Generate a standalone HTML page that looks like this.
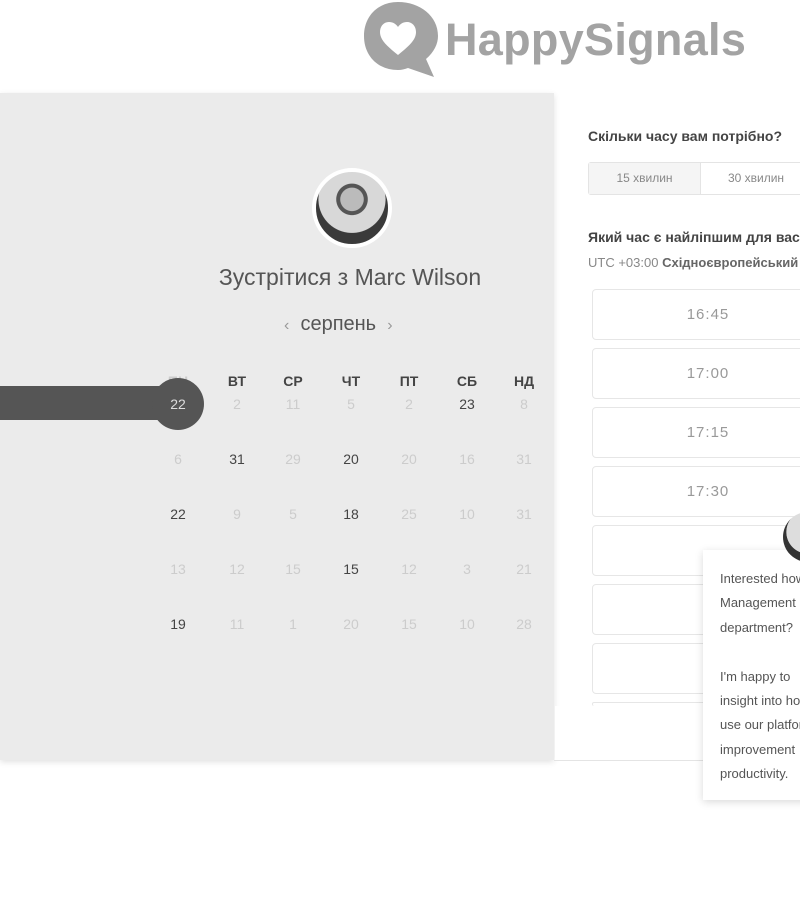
<!DOCTYPE html>
<html><head><meta charset="utf-8"><style>
body{margin:0;width:800px;height:900px;background:#fff;position:relative;overflow:hidden;font-family:"Liberation Sans",sans-serif;color:#555}
.a{position:absolute}
.left{left:0;top:93px;width:554px;height:667px;background:#ebebeb;box-shadow:0 2px 6px rgba(0,0,0,.12)}
.line{left:554px;top:760px;width:246px;height:1px;background:#e4e4e4}
.c{position:absolute;width:50px;margin-left:-25px;text-align:center;font-size:14px}
.h{font-weight:bold;color:#444;font-size:14px}
.g{color:#ccc}.d{color:#444}.w{color:#ddd}
.slot{left:592px;width:230px;height:49px;border:1px solid #e6e6e6;border-radius:4px;background:#fff;text-align:center;line-height:49px;font-size:15px;color:#999;letter-spacing:1px}
.pop{left:703px;top:550px;width:120px;height:250px;background:#fff;box-shadow:0 2px 8px rgba(0,0,0,.15);font-size:13px;color:#555;line-height:24.4px}
</style></head><body>
<svg class="a" style="left:362px;top:0" width="76" height="78" viewBox="0 0 76 78">
<path d="M36 2C16 2 2 16 2 36s14 34 34 34c4 0 7 -1 10 -2l26 9 -8 -18c8 -7 12 -15 12 -23C76 16 58 2 36 2z" fill="#a3a3a3"/>
<path d="M36 55C25 46 18 40 18 32c0-6 4-10 9-10 4 0 7 2 9 5 2-3 5-5 9-5 5 0 9 4 9 10 0 8-7 14-18 23z" fill="#fff"/>
</svg>
<div class="a" style="left:445px;top:14px;font-size:45px;font-weight:bold;color:#a3a3a3;letter-spacing:0.3px">HappySignals</div>
<div class="a left"></div>
<div class="a line"></div>
<div class="a" style="left:312px;top:168px;width:72px;height:72px;border-radius:50%;border:4px solid #fff;background:radial-gradient(circle at 50% 38%,#bbb 0 20%,#555 21% 27%,#d8d8d8 28% 58%,#3a3a3a 59%);"></div>
<div class="a" style="left:0;width:700px;top:264px;text-align:center;font-size:23px;color:#555">Зустрітися з Marc Wilson</div>
<div class="a" style="left:284px;top:313px;font-size:20px;color:#555"><span style="color:#999;font-size:16px">‹</span>&nbsp;&nbsp;серпень&nbsp;&nbsp;<span style="color:#999;font-size:16px">›</span></div>
<div class="a c h" style="left:178px;top:373px;color:#ccc">ПН</div>
<div class="a" style="left:0;top:386px;width:180px;height:34px;background:#555"></div>
<div class="a" style="left:152px;top:378px;width:52px;height:52px;border-radius:50%;background:#555"></div>
<div id="cal"></div>
<script>
var xs=[178,237,293,351,409,467,524],hd=["ПН","ВТ","СР","ЧТ","ПТ","СБ","НД"],
rows=[[22,2,11,5,2,23,8],[6,31,29,20,20,16,31],[22,9,5,18,25,10,31],[13,12,15,15,12,3,21],[19,11,1,20,15,10,28]],
dk=[[2,0,0,0,0,1,0],[0,1,0,1,0,0,0],[1,0,0,1,0,0,0],[0,0,0,1,0,0,0],[1,0,0,0,0,0,0]],s="";
for(var i=1;i<7;i++)s+='<div class="c h" style="left:'+xs[i]+'px;top:373px">'+hd[i]+'</div>';
for(var r=0;r<5;r++)for(var i=0;i<7;i++){var cl=dk[r][i]==2?'w':(dk[r][i]?'d':'g');
s+='<div class="c '+cl+'" style="left:'+xs[i]+'px;top:'+(396+55*r)+'px">'+rows[r][i]+'</div>';}
document.getElementById('cal').innerHTML=s;
</script>
<div class="a" style="left:588px;top:128px;font-size:14px;font-weight:bold;color:#444;white-space:nowrap">Скільки часу вам потрібно?</div>
<div class="a" style="left:588px;top:162px;width:250px;height:31px;border:1px solid #e4e4e4;border-radius:3px;background:#fff"></div>
<div class="a" style="left:589px;top:163px;width:111px;height:31px;background:#f5f5f5;border-right:1px solid #e4e4e4;text-align:center;line-height:31px;font-size:12px;color:#888">15 хвилин</div>
<div class="a" style="left:701px;top:163px;width:110px;text-align:center;line-height:31px;font-size:12px;color:#888">30 хвилин</div>
<div class="a" style="left:588px;top:229px;font-size:14px;font-weight:bold;color:#444;white-space:nowrap">Який час є найліпшим для вас?</div>
<div class="a" style="left:588px;top:255px;font-size:13px;color:#888;white-space:nowrap">UTC +03:00 <b style="color:#666">Східноєвропейський час</b></div>
<div class="a slot" style="top:289px">16:45</div>
<div class="a slot" style="top:348px">17:00</div>
<div class="a slot" style="top:407px">17:15</div>
<div class="a slot" style="top:466px">17:30</div>
<div class="a slot" style="top:525px"></div>
<div class="a slot" style="top:584px"></div>
<div class="a slot" style="top:643px"></div>
<div class="a slot" style="top:702px;height:3px;border-bottom:none"></div>
<div class="a" style="left:555px;top:706px;width:245px;height:54px;background:#fff"></div>
<div class="a pop"><div style="padding:17px 0 0 17px;white-space:nowrap">Interested how<br>Management<br>department?<br><br>I'm happy to<br>insight into how<br>use our platform<br>improvement<br>productivity.</div></div>
<div class="a" style="left:783px;top:512px;width:50px;height:50px;border-radius:50%;background:radial-gradient(circle at 50% 40%,#888 0 18%,#ddd 19% 55%,#333 56%)"></div>
</body></html>
